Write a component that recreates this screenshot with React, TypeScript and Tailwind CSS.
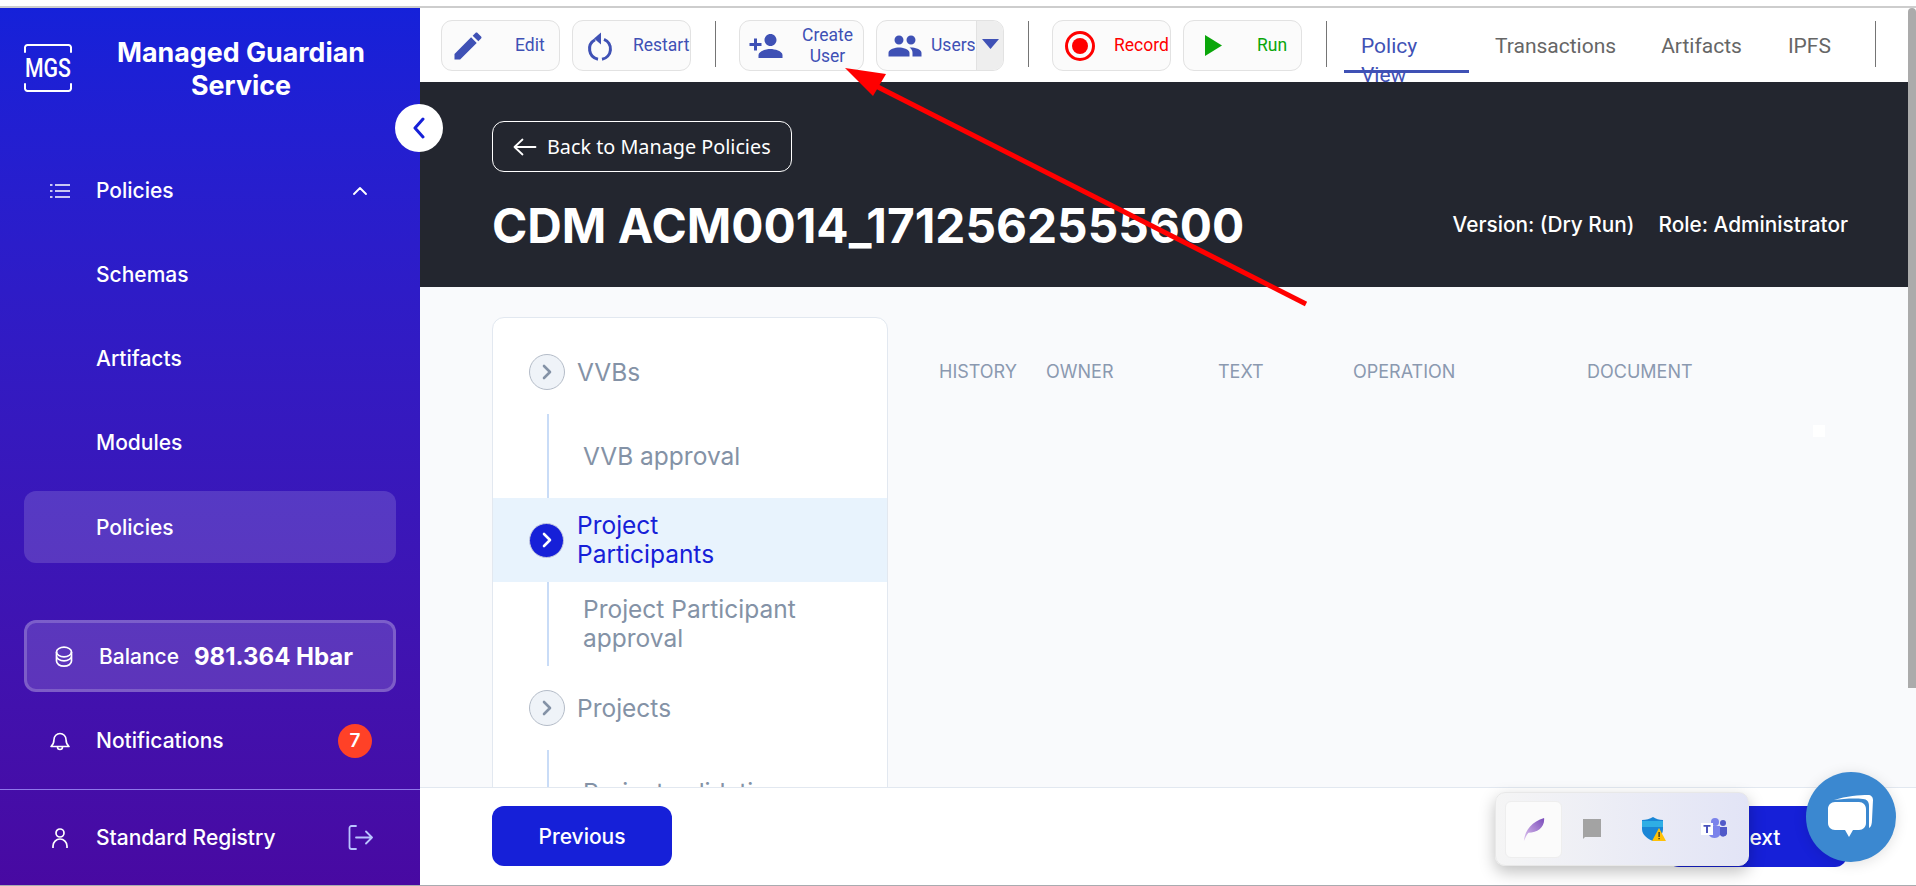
import React from "react";

const INTER = "font-['Inter',sans-serif]";
const ROBOTO = "font-['Roboto',sans-serif]";

function Mi({ d, size = 36, color = "#3f51b5" }: { d: string; size?: number; color?: string }) {
  return (
    <svg width={size} height={size} viewBox="0 0 24 24" fill={color} className="shrink-0">
      <path d={d} />
    </svg>
  );
}

const pencil = "M3 17.25V21h3.75L17.81 9.94l-3.75-3.75L3 17.25zM20.71 7.04c.39-.39.39-1.02 0-1.41l-2.34-2.34c-.39-.39-1.02-.39-1.41 0l-1.83 1.83 3.75 3.75 1.83-1.83z";
const personAdd = "M15 12c2.21 0 4-1.79 4-4s-1.79-4-4-4-4 1.79-4 4 1.79 4 4 4zm-9-2V7H4v3H1v2h3v3h2v-3h3v-2H6zm9 4c-2.67 0-8 1.34-8 4v2h16v-2c0-2.66-5.33-4-8-4z";
const people = "M16 11c1.66 0 2.99-1.34 2.99-3S17.66 5 16 5c-1.66 0-3 1.34-3 3s1.34 3 3 3zm-8 0c1.66 0 2.99-1.34 2.99-3S9.66 5 8 5C6.34 5 5 6.34 5 8s1.34 3 3 3zm0 2c-2.33 0-7 1.17-7 3.5V19h14v-2.5c0-2.33-4.67-3.5-7-3.5zm8 0c-.29 0-.62.02-.97.05 1.16.84 1.97 1.97 1.97 3.45V19h6v-2.5c0-2.33-4.67-3.5-7-3.5z";

function Sep() {
  return <div className="w-px h-[46px] bg-[#757575] shrink-0" />;
}

function NavItem({ children }: { children: React.ReactNode }) {
  return <div className="h-[84px] flex items-center pl-[96px] text-[21px] font-medium text-white">{children}</div>;
}

function Chevron({ active }: { active?: boolean }) {
  return (
    <div className={active ? "w-[35px] h-[35px] rounded-full bg-[#1620d8] flex items-center justify-center shrink-0 border border-[#c7cbe0]" : "w-[36px] h-[36px] rounded-full bg-[#eff3f8] border border-[#b4bcc8] flex items-center justify-center shrink-0"}>
      <svg width="14" height="18" viewBox="0 0 14 18" fill="none" stroke={active ? "#ffffff" : "#8492a6"} strokeWidth="2.6" strokeLinecap="round" strokeLinejoin="round">
        <path d="M4 3l6 6-6 6" />
      </svg>
    </div>
  );
}

function StepHead({ label, active }: { label: React.ReactNode; active?: boolean }) {
  return (
    <div className={active ? "h-[84px] flex items-center gap-[13px] pl-[36px] bg-[#e8f3fd] text-[#1620d8]" : "h-[84px] flex items-center gap-[12px] pl-[36px] text-[#8492a6]"}>
      <Chevron active={active} />
      <div className="leading-[29px]">{label}</div>
    </div>
  );
}

function StepSub({ children }: { children: React.ReactNode }) {
  return (
    <div className="h-[84px] ml-[54px] border-l-2 border-[#c9dcf7] flex items-center pl-[34px] text-[#8492a6] leading-[29px]">
      <div>{children}</div>
    </div>
  );
}

export default function App() {
  return (
    <div className={`relative w-[1916px] h-[886px] overflow-hidden bg-white flex flex-col ${INTER}`}>
      <div className="h-[8px] shrink-0 bg-white border-b-2 border-[#cdcdcd]" />
      <div className="flex flex-1 min-h-0">
        <aside className="w-[420px] shrink-0 flex flex-col bg-gradient-to-b from-[#1521d9] to-[#4809a2] text-white">
          <div className="h-[141px] shrink-0 flex pt-[28px] pl-[24px]">
            <svg width="48" height="48" viewBox="0 0 48 48" fill="none" className="mt-[8px] shrink-0">
              <path d="M1 8V3.5A2.5 2.5 0 0 1 3.5 1h41A2.5 2.5 0 0 1 47 3.5V8M1 40v4.5A2.5 2.5 0 0 0 3.5 47h41a2.5 2.5 0 0 0 2.5-2.5V40" stroke="#fff" strokeWidth="2" strokeLinecap="round" />
              <text x="24" y="33" textAnchor="middle" fill="#fff" fontSize="26" fontWeight="500" fontFamily="Roboto, sans-serif" textLength="46" lengthAdjust="spacingAndGlyphs">MGS</text>
            </svg>
            <div className="w-[300px] ml-[19px] text-center text-[26.800px] leading-[33px] font-bold">Managed Guardian Service</div>
          </div>
          <div className="h-[84px] flex items-center pl-[50px] pr-[53px] text-[21px] font-medium">
            <svg width="20" height="16" viewBox="0 0 20 16" fill="none" stroke="#fff" strokeWidth="1.6" className="shrink-0">
              <path d="M5 2h15M5 8h15M5 14h15M0 2h2.5M0 8h2.5M0 14h2.5" />
            </svg>
            <span className="ml-[26px] flex-1">Policies</span>
            <svg width="14" height="8" viewBox="0 0 14 8" fill="none" stroke="#fff" strokeWidth="1.8" strokeLinecap="round" strokeLinejoin="round">
              <path d="M1 7l6-6 6 6" />
            </svg>
          </div>
          <NavItem>Schemas</NavItem>
          <NavItem>Artifacts</NavItem>
          <NavItem>Modules</NavItem>
          <div className="h-[72px] mx-[24px] mt-[6px] pt-[1px] rounded-[12px] bg-white/15 flex items-center pl-[72px] text-[21px] font-medium">Policies</div>
          <div className="h-[72px] mx-[24px] mt-[57px] pt-[1px] rounded-[12px] bg-white/15 border-[3px] border-white/20 flex items-center pl-[28px]">
            <svg width="18" height="22" viewBox="0 0 18 22" fill="none" stroke="#fff" strokeWidth="1.7" className="shrink-0">
              <ellipse cx="9" cy="6" rx="7.5" ry="4.8" />
              <path d="M1.5 6v4c0 2.6 3.4 4.8 7.5 4.8s7.5-2.2 7.5-4.8V6M1.5 10v5c0 2.9 3.4 5.2 7.5 5.2s7.5-2.3 7.5-5.2v-5" />
            </svg>
            <span className="ml-[26px] text-[21px] font-medium">Balance</span>
            <span className="ml-[15px] text-[24px] font-bold">981.364 Hbar</span>
          </div>
          <div className="h-[84px] mt-[7px] flex items-center pl-[50px] pr-[48px] text-[21px] font-medium">
            <svg width="20" height="20" viewBox="0 0 20 20" fill="none" stroke="#fff" strokeWidth="1.6" strokeLinejoin="round" className="shrink-0">
              <path d="M4 8.5a6 6 0 0 1 12 0c0 4 1.2 5.5 3 7H1c1.8-1.500 3-3 3-7zM7.500 16a2.500 2.500 0 0 0 5 0" />
            </svg>
            <span className="ml-[26px] flex-1">Notifications</span>
            <div className="w-[34px] h-[34px] rounded-full bg-[#ff4127] flex items-center justify-center text-[19px] font-semibold">7</div>
          </div>
          <div className="border-t border-[#8f78ea] h-[96px] flex items-center pl-[52px] pr-[47px] text-[21px] font-medium mt-[6px]">
            <svg width="16" height="20" viewBox="0 0 16 20" fill="none" stroke="#fff" strokeWidth="1.7" className="shrink-0">
              <circle cx="8" cy="5" r="4" />
              <path d="M1 20v-2a7 7 0 0 1 14 0v2" />
            </svg>
            <span className="ml-[28px] flex-1">Standard Registry</span>
            <svg width="25" height="25" viewBox="0 0 25 25" fill="none" stroke="#b9c4ff" strokeWidth="1.8" strokeLinecap="round" strokeLinejoin="round">
              <path d="M8 1H3.500A2 2 0 0 0 1.500 3v19a2 2 0 0 0 2 2H8M8 12.500h16M18 6.500l6 6-6 6" />
            </svg>
          </div>
        </aside>

        <main className="flex-1 min-w-0 flex flex-col">
          <div className={`h-[74px] shrink-0 overflow-hidden flex items-start pt-[12px] pl-[21px] bg-white ${ROBOTO}`}>
            <div className="w-[119px] h-[51px] shrink-0 rounded-[11px] border border-[#e2e2e2] bg-[#fbfbfb] flex items-center pl-[8px] text-[#3f51b5] text-[17.500px]">
              <Mi d={pencil} />
              <span className="ml-[29px]">Edit</span>
            </div>
            <div className="w-[119px] h-[51px] ml-[12px] shrink-0 rounded-[11px] border border-[#e2e2e2] bg-[#fbfbfb] flex items-center pl-[9px] text-[#3f51b5] text-[17.500px] overflow-hidden">
              <svg width="36" height="36" viewBox="0 0 36 36" fill="none" stroke="#3f51b5" strokeWidth="3" className="shrink-0">
                <path d="M22 11.300A10.500 10.500 0 0 1 20 31.300M16 31.300A10.500 10.500 0 0 1 13 11.800" />
                <path d="M19 4.500v12l-7-6z" fill="#3f51b5" stroke="none" />
              </svg>
              <span className="ml-[15px]">Restart</span>
            </div>
            <div className="ml-[24px] mt-[1px]"><Sep /></div>
            <div className="w-[125px] h-[51px] ml-[23px] shrink-0 rounded-[11px] border border-[#e2e2e2] bg-[#fbfbfb] flex items-center pl-[8px] text-[#3f51b5] text-[17.500px]">
              <Mi d={personAdd} />
              <span className="w-[72px] ml-[8px] text-center leading-[21px]">Create User</span>
            </div>
            <div className="w-[128px] h-[51px] ml-[12px] shrink-0 rounded-[11px] border border-[#e2e2e2] bg-[#fbfbfb] flex items-center pl-[10px] text-[#3f51b5] text-[17.500px] overflow-hidden">
              <Mi d={people} />
              <span className="ml-[8px] w-[45px] overflow-hidden">Users</span>
              <div className="ml-[1px] w-[27px] h-full bg-[#eeeeee] border-l border-[#e2e2e2] flex items-start justify-center pt-[18px]">
                <svg width="17" height="10" viewBox="0 0 17 10"><path d="M0 0h17l-8.500 10z" fill="#3f51b5" /></svg>
              </div>
            </div>
            <div className="ml-[24px] mt-[1px]"><Sep /></div>
            <div className="w-[119px] h-[51px] ml-[23px] shrink-0 rounded-[11px] border border-[#e2e2e2] bg-[#fbfbfb] flex items-center pl-[11px] text-[#ff0000] text-[17.500px]">
              <svg width="32" height="32" viewBox="0 0 32 32" className="shrink-0">
                <circle cx="16" cy="16" r="13.500" fill="none" stroke="#ff0000" strokeWidth="3" />
                <circle cx="16" cy="16" r="8" fill="#ff0000" />
              </svg>
              <span className="ml-[18px]">Record</span>
            </div>
            <div className="w-[119px] h-[51px] ml-[12px] shrink-0 rounded-[11px] border border-[#e2e2e2] bg-[#fbfbfb] flex items-center pl-[21px] text-[#0aa60a] text-[17.500px]">
              <svg width="17" height="21" viewBox="0 0 17 21" className="shrink-0"><path d="M0 0l17 10.500L0 21z" fill="#0aa60a" /></svg>
              <span className="ml-[35px]">Run</span>
            </div>
            <div className="ml-[24px] mt-[1px]"><Sep /></div>
            <div className="relative w-[125px] h-[53px] ml-[17px] pl-[17px] pt-[12px] shrink-0 text-[21px] leading-[29px] text-[#3f51b5]">
              <div className="w-[70px]">Policy View</div>
              <div className="absolute left-0 right-0 bottom-0 h-[3px] bg-[#3f51b5]" />
            </div>
            <div className="ml-[26px] mt-[12px] text-[21px] leading-[29px] text-[#666666]">Transactions</div>
            <div className="ml-[45px] mt-[12px] text-[21px] leading-[29px] text-[#666666]">Artifacts</div>
            <div className="ml-[46px] mt-[12px] text-[21px] leading-[29px] text-[#666666]">IPFS</div>
            <div className="ml-[44px] mt-[1px]"><Sep /></div>
          </div>

          <div className="h-[205px] shrink-0 bg-[#23262f] text-white pl-[72px] pr-[68px] pt-[39px]">
            <div className="w-[300px] h-[51px] rounded-[12px] border border-white flex items-center pl-[20px] font-['Noto_Sans',sans-serif] text-[19.800px]">
              <svg width="24" height="18" viewBox="0 0 24 18" fill="none" stroke="#fff" strokeWidth="1.800" strokeLinecap="round" strokeLinejoin="round" className="shrink-0">
                <path d="M1.500 9h21M9.500 1.500L1.500 9l8 7.500" />
              </svg>
              <span className="ml-[10px] whitespace-nowrap">Back to Manage Policies</span>
            </div>
            <div className="mt-[24px] flex items-center justify-between">
              <div className="text-[47.800px] leading-[60px] font-bold whitespace-nowrap">CDM ACM0014_1712562555600</div>
              <div className="flex gap-[24px] text-[20.800px] font-medium pb-[3px]">
                <span>Version: (Dry Run)</span>
                <span>Role: Administrator</span>
              </div>
            </div>
          </div>

          <div className="flex-1 min-h-0 overflow-hidden bg-[#f9fafc] flex pl-[72px] pt-[30px]">
            <div className="w-[396px] h-[600px] shrink-0 rounded-[12px] border border-[#e2e8f0] bg-white pt-[12px] text-[24.500px]">
              <StepHead label="VVBs" />
              <StepSub>VVB approval</StepSub>
              <StepHead active label={<span>Project<br />Participants</span>} />
              <StepSub>Project Participant<br />approval</StepSub>
              <StepHead label="Projects" />
              <StepSub>Project validation</StepSub>
            </div>
            <div className="flex pt-[43px] text-[18px] leading-[24px] text-[#8b99b0] uppercase">
              <span className="ml-[51px] w-[107px]">History</span>
              <span className="w-[172px]">Owner</span>
              <span className="w-[135px]">Text</span>
              <span className="w-[234px]">Operation</span>
              <span>Document</span>
            </div>
            <div className="ml-[120px] mt-[108px] w-[12px] h-[12px] bg-white shrink-0" />
          </div>

          <div className="h-[98px] shrink-0 border-t border-[#e2e8f0] bg-white flex items-start justify-between pt-[18px] pl-[72px] pr-[69px]">
            <div className="w-[180px] h-[60px] pt-[2px] rounded-[12px] bg-[#1620d8] text-white text-[21px] font-medium flex items-center justify-center">Previous</div>
            <div className="w-[180px] h-[61px] pt-[2px] rounded-[12px] bg-[#1620d8] text-white text-[21px] font-medium flex items-center justify-center">Next</div>
          </div>
        </main>
      </div>
      <div className="h-px shrink-0 bg-[#a8abb0]" />

      {/* scrollbar */}
      <div className="absolute right-0 top-[8px] w-[8px] h-[680px] bg-[#ababab] rounded-t-[4px]" />

      {/* collapse button */}
      <div className="absolute left-[395px] top-[104px] w-[48px] h-[48px] rounded-full bg-white flex items-center justify-center">
        <svg width="14" height="22" viewBox="0 0 14 22" fill="none" stroke="#1620d8" strokeWidth="3" strokeLinecap="round" strokeLinejoin="round">
          <path d="M11 2L3 11l8 9" />
        </svg>
      </div>

      {/* red annotation arrow */}
      <svg className="absolute left-0 top-0 pointer-events-none" width="1916" height="886" viewBox="0 0 1916 886" fill="none">
        <path d="M1306 304L868 82" stroke="#ff0000" strokeWidth="5" />
        <path d="M845 68L886 74L873 96z" fill="#ff0000" />
      </svg>

      {/* tray popup */}
      <div className="absolute left-[1495px] top-[792px] w-[254px] h-[74px] rounded-[10px] bg-gradient-to-r from-[#f5f5f5] to-[#e2e4f6] border border-[#e8e8e8] shadow-[0_6px_16px_rgba(0,0,0,0.25)] flex items-center pl-[9px]">
        <div className="w-[57px] h-[57px] rounded-[6px] bg-[#fbfbfb] border border-[#eeeeee] flex items-center justify-center shrink-0">
          <svg width="22" height="24" viewBox="0 0 24 26">
            <defs>
              <linearGradient id="fth" x1="0" y1="1" x2="1" y2="0">
                <stop offset="0" stopColor="#e0c6f0" />
                <stop offset="1" stopColor="#7a4cba" />
              </linearGradient>
            </defs>
            <path d="M1 26C2 14 10 5 23 1c1 10-7 16-17 16-2 2-3 5-5 9z" fill="url(#fth)" />
          </svg>
        </div>
        <svg width="18" height="20" viewBox="0 0 18 20" className="ml-[21px] shrink-0"><path d="M0 0h18v18H2l-2 2z" fill="#a3a3a3" /></svg>
        <svg width="24" height="24" viewBox="0 0 24 24" className="ml-[41px] shrink-0">
          <path d="M11 0c3 2 6 3 10 3v9c0 6-5 10-10 12C6 22 0 18 0 12V3c4 0 8-1 11-3z" fill="#1a86d6" />
          <path d="M0 4h21v6H0z" fill="#35b8e8" opacity=".8" />
          <path d="M17 11l7 13H10z" fill="#ffc107" />
          <path d="M16.500 15h1.200v5h-1.200zM16.500 21h1.200v1.200h-1.200z" fill="#222" />
        </svg>
        <svg width="26" height="22" viewBox="0 0 26 22" className="ml-[35px] shrink-0">
          <circle cx="14" cy="4" r="4" fill="#7b83eb" />
          <circle cx="22" cy="5" r="3" fill="#5059c9" />
          <path d="M8 8h11v9a6 5 0 0 1-11 0z" fill="#7b83eb" />
          <path d="M19 9h7v7a4 4 0 0 1-7 1z" fill="#5059c9" />
          <path d="M0 5h12v12H0z" fill="#ffffff" />
          <path d="M2.500 7h7v1.800H7V15H5V8.800H2.500z" fill="#4b53bc" />
        </svg>
      </div>

      {/* chat button */}
      <div className="absolute left-[1806px] top-[772px] w-[90px] h-[90px] rounded-full bg-[#3b88d0] flex items-center justify-center shadow-[0_2px_14px_rgba(0,0,0,0.12)]">
        <svg width="46" height="46" viewBox="0 0 46 46">
          <path d="M6 6C18 2 32 1 40 1c3 0 5 2 5 5l-1 20c0 4-1 7-3 8V12c0-4-2-7-6-7C25 4 15 5 6 6z" fill="#fff" />
          <path d="M7 8h24c4 0 7 3 7 7v14c0 4-3 7-7 7h-6l-4 7-4-7H7c-4 0-7-3-7-7V15c0-4 3-7 7-7z" fill="#fff" />
        </svg>
      </div>
    </div>
  );
}
